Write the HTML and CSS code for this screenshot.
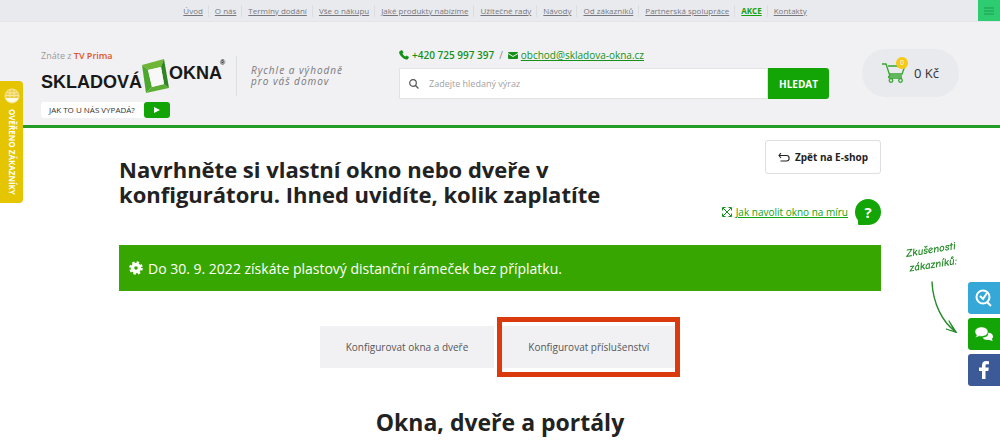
FILE: index.html
```html
<!DOCTYPE html>
<html lang="cs">
<head>
  <meta charset="UTF-8" />
  <meta name="viewport" content="width=device-width, initial-scale=1.0"/>
  <title>Skladová okna - konfigurátor</title>
  <link rel="stylesheet" href="styles.css">
</head>
<body>

  <!-- Top navigation -->
  <nav class="top-nav">
    <ul class="top-links">
      <li><a href="#">Úvod</a></li>
      <li><a href="#">O nás</a></li>
      <li><a href="#">Termíny dodání</a></li>
      <li><a href="#">Vše o nákupu</a></li>
      <li><a href="#">Jaké produkty nabízíme</a></li>
      <li><a href="#">Užitečné rady</a></li>
      <li><a href="#">Návody</a></li>
      <li><a href="#">Od zákazníků</a></li>
      <li><a href="#">Partnerská spolupráce</a></li>
      <li><a href="#" class="sale">AKCE</a></li>
      <li><a href="#">Kontakty</a></li>
    </ul>
    <button class="menu-btn" aria-label="Menu">
      <svg width="12" height="8" viewBox="0 0 12 8"><path d="M1 1h10M1 4h10M1 7h10" stroke="#1f9a50" stroke-width="1"/></svg>
    </button>
  </nav>

  <!-- Header -->
  <header class="header">
    <div class="brand">
      <div class="brand-main">
        <p class="known">Znáte z <strong>TV Prima</strong></p>
        <a href="#" class="logo" aria-label="Skladová okna">
          <svg width="184" height="36" viewBox="0 0 184 36">
            <text x="0" y="29" class="logo-text">SKLADOVÁ</text>
            <path d="M101 6L123 0L120 8L107 11Z" fill="#6fb536"/>
            <path d="M101 6L107 11L111 28L105 34Z" fill="#4ba82e"/>
            <path d="M105 34L111 28L123 25L128 29Z" fill="#5cae33"/>
            <path d="M123 0L128 29L123 25L120 8Z" fill="#2f8424"/>
            <path d="M107 11L120 8L123 25L111 28Z" fill="#f8f8f8"/>
            <text x="128" y="20" class="logo-text">OKNA</text>
            <text x="179" y="6" class="logo-mark">®</text>
          </svg>
        </a>
        <a href="#" class="video-link">
          <span class="video-label">JAK TO U NÁS VYPADÁ?</span>
          <span class="video-play"><svg width="6" height="6" viewBox="0 0 6 6"><path d="M0 0l6 3-6 3z" fill="#fff"/></svg></span>
        </a>
      </div>
      <p class="slogan">Rychle a výhodně<br>pro váš domov</p>
    </div>

    <div class="contact">
      <div class="contact-line">
        <svg width="10" height="10" viewBox="0 0 10 10"><path d="M1 1l2-1 1.500 2.500-1 1c.5 1.300 1.500 2.400 3 3l1-1L10 7 9 9C8 10 6 9.500 4 8 2 6.500.5 4.500.2 3 0 2 .3 1.500 1 1z" fill="#15911a"/></svg>
        <strong>+420 725 997 397</strong>
        <span class="slash">/</span>
        <svg width="10" height="7" viewBox="0 0 10 7"><rect width="10" height="7" rx="1" fill="#15911a"/><path d="M0 1.500l5 3 5-3" fill="none" stroke="#f1f1f3" stroke-width="1"/></svg>
        <a href="#">obchod@skladova-okna.cz</a>
      </div>
      <form class="search">
        <label for="search" class="search-field">
          <svg width="10" height="10" viewBox="0 0 10 10" fill="none" stroke="#555" stroke-width="1.200"><circle cx="4" cy="4" r="3.300"/><path d="M6.500 6.500L9.500 9.500"/></svg>
          <input type="text" id="search" placeholder="Zadejte hledaný výraz" aria-label="Zadejte hledaný výraz">
        </label>
        <button type="button">HLEDAT</button>
      </form>
    </div>

    <a href="#" class="cart">
      <span class="cart-icon">
        <svg width="24" height="20" viewBox="0 0 24 20" fill="none" stroke="#35a52f" stroke-width="1.300"><path d="M0 1h4l4 12h12M6 3h17l-3 8H7M8 13c-2 0-2 2 0 2h12"/><circle cx="9" cy="17.500" r="1.800"/><circle cx="18.500" cy="17.500" r="1.800"/></svg>
        <span class="cart-count">0</span>
      </span>
      <span>0 Kč</span>
    </a>
  </header>

  <!-- Content -->
  <main class="content">
    <div class="intro">
      <h1>Navrhněte si vlastní okno nebo dveře v konfigurátoru. Ihned uvidíte, kolik zaplatíte</h1>
      <div class="intro-side">
        <a href="#" class="back-btn">
          <svg width="12" height="9" viewBox="0 0 12 9" fill="none" stroke="#222" stroke-width="1.100"><path d="M3 0L1 2.500 3 5M1 2.500h7.500c3.500 0 3.500 5.500 0 5.500H2.500"/></svg>
          Zpět na E-shop
        </a>
        <div class="help">
          <svg width="10" height="10" viewBox="0 0 10 10" fill="none" stroke="#15911a" stroke-width="1"><path d="M.5 3.500V.5h3M6.500 .5h3v3M9.500 6.500v3h-3M3.500 9.500h-3v-3M1 1l8 8M9 1L1 9"/></svg>
          <a href="#">Jak navolit okno na míru</a>
          <button class="help-btn" aria-label="Nápověda">?</button>
        </div>
      </div>
    </div>

    <div class="notice">
      <svg width="14" height="14" viewBox="0 0 14 14"><circle cx="7" cy="7" r="3.500" fill="none" stroke="#fff" stroke-width="3.400"/><circle cx="7" cy="7" r="5.700" fill="none" stroke="#fff" stroke-width="2.200" stroke-dasharray="2.400 2.077"/></svg>
      Do 30. 9. 2022 získáte plastový distanční rámeček bez příplatku.
    </div>

    <div class="tabs">
      <button class="tab">Konfigurovat okna a dveře</button>
      <div class="highlight"><button class="tab">Konfigurovat příslušenství</button></div>
    </div>

    <h2>Okna, dveře a portály</h2>
  </main>

  <!-- Verified by customers tab -->
  <a href="#" class="verified">
    <svg width="16" height="16" viewBox="0 0 16 16"><circle cx="8" cy="8" r="7" fill="#edcf4c" stroke="#f7e9a2"/><path d="M1.500 10h13a7 7 0 0 1-13 0z" fill="#fffbe5"/><path d="M3 5h10M2 7.500h12M6 2v7M10 2v7" stroke="#f7e9a2" fill="none"/></svg>
    <span>OVĚŘENO ZÁKAZNÍKY</span>
  </a>

  <!-- Customer experience -->
  <aside class="experience">
    <p>Zkušenosti<br>zákazníků:</p>
    <svg width="28" height="54" viewBox="0 0 28 54" fill="none" stroke="#238c27" stroke-linecap="round"><path d="M2 1C3 22 12 41 26 51" stroke-width="1.400"/><path d="M19 40l7 11-10-3 9 3-6-11" stroke-width="1.200"/></svg>
  </aside>
  <div class="social">
    <a href="#" class="reviews" aria-label="Hodnocení">
      <svg width="18" height="18" viewBox="0 0 18 18" fill="none" stroke="#fff" stroke-width="2"><circle cx="8" cy="8" r="6.500"/><path d="M5 7l3 3 4-6M12 13l4 4"/></svg>
    </a>
    <a href="#" class="chat" aria-label="Diskuze">
      <svg width="18" height="14" viewBox="0 0 18 14" fill="#fff"><path d="M13 5.500c3 .3 5 1.800 5 4 0 1-.5 1.800-1.200 2.400.2.800.7 1.300 1.200 1.800-1.500.1-2.600-.3-3.500-.8-3 .5-6-.4-7-2.400 4 0 6.500-2.200 5.500-5z"/><path d="M6.500 0C10 0 13 2 13 4.800S10 9.500 6.500 9.500c-.8 0-1.500-.1-2.200-.3C3 10 1.800 10.300.2 10.200c.7-.6 1.100-1.300 1.300-2.100C.6 7.200 0 6 0 4.800 0 2 3 0 6.500 0z" stroke="#12a505" stroke-width=".6"/></svg>
    </a>
    <a href="#" class="facebook" aria-label="Facebook">
      <svg width="10" height="18" viewBox="0 0 10 18"><path d="M3 18V10H0V6.500h3V4.300C3 1.500 4.700 0 7.200 0L10 .2v3H8.200C6.900 3.200 6.500 3.800 6.500 4.800v1.700h3.300L9.300 10H6.500v8z" fill="#fff"/></svg>
    </a>
  </div>

</body>
</html>
```
FILE: styles.css
```css
* {
  margin: 0;
  padding: 0;
  box-sizing: border-box;
}

body {
  font-family: 'Open Sans', sans-serif;
  font-size: 10px;
  color: #222;
  background: #fff;
}

svg {
  display: block;
  flex: none;
}

button, input {
  font-family: inherit;
  border: none;
}

button {
  cursor: pointer;
}

a {
  color: inherit;
}

.top-nav {
  position: relative;
  display: flex;
  justify-content: center;
  align-items: center;
  height: 22px;
  padding-right: 10px;
  background: #e9eaee;
  border-bottom: 1px solid #e4e5e9;
}

.top-links {
  display: flex;
  list-style: none;
  font-size: 8px;
  line-height: 12px;
  color: #77787d;
}

.top-links li + li {
  margin-left: 5px;
  padding-left: 6px;
  border-left: 1px solid #dcdde1;
}

.top-links .sale {
  color: #15a00d;
  font-weight: bold;
}

.menu-btn {
  position: absolute;
  top: 0;
  right: 0;
  width: 22px;
  height: 21px;
  padding: 0 5px;
  background: #2ecc71;
}

.header {
  display: flex;
  justify-content: space-between;
  align-items: flex-start;
  padding: 27px 41px 7px;
  background: #f1f1f3;
  border-bottom: 3px solid #239b27;
}

.brand {
  display: flex;
  width: 325px;
}

.brand-main {
  width: 195px;
}

.known {
  font-size: 9px;
  line-height: 14px;
  color: #999;
}

.known strong {
  font-weight: 600;
  color: #e3521f;
}

.logo {
  display: block;
  margin-top: -4px;
}

.logo svg {
  overflow: visible;
}

.logo-text {
  font: bold 18px 'Liberation Sans', sans-serif;
  fill: #181818;
}

.logo-mark {
  font: bold 7px 'Liberation Sans', sans-serif;
}

.video-link {
  display: inline-flex;
  height: 16px;
  margin-top: 7px;
  background: #fff;
  border-radius: 3px;
  text-decoration: none;
}

.video-label {
  width: 103px;
  padding-left: 8px;
  font-size: 8px;
  line-height: 16px;
  white-space: nowrap;
  color: #333;
}

.video-play {
  display: flex;
  align-items: center;
  justify-content: center;
  width: 26px;
  border-radius: 3px;
  background: #12a505;
}

.slogan {
  height: 40px;
  margin-top: 7px;
  padding: 9px 0 0 14px;
  border-left: 1px solid #dedfe3;
  font-size: 10px;
  line-height: 11px;
  font-style: italic;
  letter-spacing: 1px;
  white-space: nowrap;
  color: #77787c;
}

.contact {
  flex: 1;
  margin: 0 33px;
}

.contact-line {
  display: flex;
  align-items: center;
  gap: 3px;
  height: 12px;
  margin-bottom: 7px;
  font-size: 10px;
  color: #15911a;
}

.contact-line strong {
  font-weight: 600;
}

.slash {
  margin: 0 2px;
  color: #888;
}

.search {
  display: flex;
  height: 31px;
}

.search-field {
  display: flex;
  flex: 1;
  align-items: center;
  gap: 10px;
  padding-left: 9px;
  background: #fff;
  border: 1px solid #e2e2e5;
}

.search input {
  flex: 1;
  min-width: 0;
  font-size: 9px;
  background: none;
  outline: none;
}

.search input::placeholder {
  color: #a2a2a2;
}

.search button {
  width: 61px;
  font-size: 10px;
  font-weight: bold;
  color: #fff;
  background: #12a505;
  border-radius: 0 3px 3px 0;
}

.cart {
  display: flex;
  align-items: center;
  gap: 8px;
  width: 97px;
  height: 48px;
  padding-left: 20px;
  border-radius: 24px;
  background: #e9eaee;
  font-size: 13px;
  color: #333;
  text-decoration: none;
}

.cart-icon {
  position: relative;
}

.cart-count {
  position: absolute;
  top: -6px;
  right: -2px;
  width: 12px;
  height: 12px;
  border-radius: 50%;
  background: #f6c914;
  font-size: 7px;
  line-height: 12px;
  text-align: center;
  color: #fff;
}

.content {
  padding: 12px 119px 0;
}

.intro {
  display: flex;
  justify-content: space-between;
  align-items: flex-start;
}

h1 {
  width: 500px;
  margin-top: 17px;
  font-size: 22px;
  line-height: 25px;
}

.intro-side {
  display: flex;
  flex-direction: column;
  align-items: flex-end;
  gap: 25px;
}

.back-btn {
  display: flex;
  align-items: center;
  gap: 5px;
  height: 34px;
  padding: 0 12px;
  border: 1px solid #dedede;
  border-radius: 3px;
  font-size: 10px;
  font-weight: bold;
  text-decoration: none;
}

.help {
  display: flex;
  align-items: center;
  gap: 4px;
  font-size: 10px;
  color: #15a00d;
}

.help-btn {
  position: relative;
  width: 26px;
  height: 26px;
  margin-left: 3px;
  border-radius: 50%;
  background: #12a505;
  color: #fff;
  font-size: 15px;
  font-weight: bold;
  line-height: 26px;
}

/* bubble tail */
.help-btn::before {
  content: "";
  position: absolute;
  left: 3px;
  bottom: 0;
  width: 8px;
  height: 8px;
  border-radius: 0 0 0 1px;
  background: #12a505;
}

.notice {
  display: flex;
  align-items: center;
  gap: 5px;
  height: 46px;
  margin-top: 20px;
  padding-left: 10px;
  background: #37a600;
  font-size: 14px;
  color: #fff;
}

.tabs {
  display: flex;
  justify-content: center;
  align-items: center;
  gap: 3px;
  margin-top: 26px;
}

.tab {
  height: 42px;
  padding: 0 26px;
  background: #f1f1f3;
  font-size: 10px;
  color: #56565a;
}

.highlight {
  padding: 4px 0;
  border: 5px solid #db3b0c;
}

h2 {
  margin-top: 30px;
  font-size: 23px;
  line-height: 30px;
  text-align: center;
}

.verified {
  position: fixed;
  top: 81px;
  left: 0;
  display: flex;
  flex-direction: column;
  align-items: center;
  gap: 5px;
  width: 23px;
  height: 122px;
  padding-top: 7px;
  background: #e5c400;
  border-radius: 0 4px 4px 0;
  text-decoration: none;
  color: #fff;
}

.verified span {
  writing-mode: vertical-rl;
  font-size: 8px;
  font-weight: bold;
  line-height: 12px;
  white-space: nowrap;
}

.experience {
  position: fixed;
  top: 242px;
  right: 38px;
  width: 60px;
  color: #238c27;
}

.experience p {
  font-family: 'Comic Neue', 'Open Sans', cursive;
  font-size: 11px;
  font-style: italic;
  font-weight: bold;
  line-height: 15px;
  text-align: center;
  transform: rotate(-9deg);
}

.experience svg {
  margin: 9px 0 0 28px;
}

.social {
  position: fixed;
  top: 282px;
  right: 0;
  display: flex;
  flex-direction: column;
  gap: 4px;
}

.social a {
  display: flex;
  align-items: center;
  justify-content: center;
  width: 32px;
  height: 32px;
  border-radius: 3px 0 0 3px;
}

.reviews {
  background: #35a8d8;
}

.chat {
  background: #12a505;
}

.facebook {
  background: #3c5a98;
}
```
